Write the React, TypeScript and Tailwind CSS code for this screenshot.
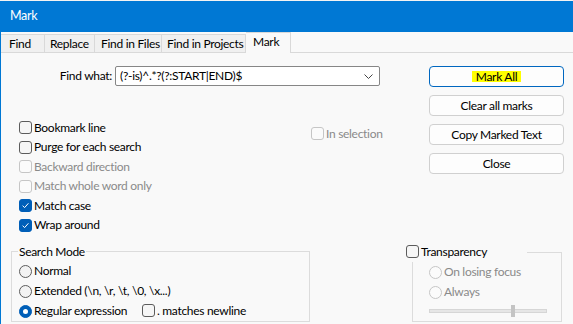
import React from "react";

type BoxProps = {
  checked?: boolean;
  disabled?: boolean;
  children?: React.ReactNode;
};

function Check({ checked = false, disabled = false, children }: BoxProps) {
  return (
    <div className={`flex items-center h-[19.5px] ${disabled ? "text-[#8a8a8a]" : "text-black"}`}>
      <span
        className={`w-[13px] h-[13px] rounded-[3px] border flex items-center justify-center shrink-0 ${
          checked
            ? "bg-[#005fb8] border-[#005fb8]"
            : disabled
            ? "bg-[#fbfbfb] border-[#c6c6c6]"
            : "bg-[#f6f6f6] border-[#5c5c5c]"
        }`}
      >
        {checked && (
          <svg width="9" height="9" viewBox="0 0 9 9">
            <path d="M1.6 4.7 L3.6 6.6 L7.4 2.3" stroke="white" strokeWidth="1" fill="none" />
          </svg>
        )}
      </span>
      {children && <span className="ml-[2px] whitespace-nowrap">{children}</span>}
    </div>
  );
}

function Radio({ checked = false, disabled = false, children }: BoxProps) {
  return (
    <div className={`flex items-center h-[20px] ${disabled ? "text-[#8a8a8a]" : "text-black"}`}>
      <span
        className={`w-[13px] h-[13px] rounded-full border flex items-center justify-center shrink-0 ${
          checked
            ? "bg-[#005fb8] border-[#005fb8]"
            : disabled
            ? "bg-[#fbfbfb] border-[#c6c6c6]"
            : "bg-[#f3f3f3] border-[#5c5c5c]"
        }`}
      >
        {checked && <span className="w-[5px] h-[5px] rounded-full bg-white" />}
      </span>
      <span className="ml-[2px] whitespace-nowrap">{children}</span>
    </div>
  );
}

function Button({ primary = false, children }: { primary?: boolean; children: React.ReactNode }) {
  return (
    <div
      className={`h-[21px] rounded-[4px] border bg-[#fdfdfd] flex items-center justify-center ${
        primary ? "border-[#0067c0]" : "border-[#d0d0d0]"
      }`}
    >
      {children}
    </div>
  );
}

const tabs = [
  { label: "Find", cls: "w-[44px] pl-[8px]" },
  { label: "Replace", cls: "w-[50px] pl-[5px]" },
  { label: "Find in Files", cls: "w-[67px] pl-[6px]" },
  { label: "Find in Projects", cls: "w-[84px] pl-[5px]" },
];

export default function App() {
  return (
    <div className="w-[573px] h-[324px] overflow-hidden bg-[#f9f9f9] font-['Lato',sans-serif] text-[12px] tracking-[-0.3px] leading-none text-black flex flex-col">
      <div className="h-[1px] bg-[#f3f3f3] shrink-0" />
      <div className="flex-1 flex flex-col border-l border-[#0078d4]">
        {/* title bar */}
        <div className="h-[31px] bg-[#0078d4] text-white text-[12.5px] flex items-center pl-[9px] shrink-0">Mark</div>

        {/* tabs */}
        <div className="h-[21px] flex items-end shrink-0">
          {tabs.map((t) => (
            <div
              key={t.label}
              className={`${t.cls} h-[19px] bg-[#f0f0f0] border-t border-b border-r border-[#d9d9d9] flex items-center whitespace-nowrap`}
            >
              {t.label}
            </div>
          ))}
          <div className="w-[45px] h-[21px] bg-[#f9f9f9] border-t border-r border-[#d9d9d9] pl-[7px] pt-[3px]">
            Mark
          </div>
          <div className="flex-1 h-[1px] bg-[#d9d9d9]" />
        </div>

        {/* content */}
        <div className="flex-1 flex">
          <div className="w-[405px] flex flex-col">
            <div className="mt-[13px] flex items-center h-[20px]">
              <div className="w-[114px] text-right pr-[3px] whitespace-nowrap">Find what:</div>
              <div className="w-[265px] h-[20px] bg-white border border-[#868686] rounded-[2px] flex items-center pl-[4px] pr-[6px]">
                <span className="flex-1 whitespace-nowrap">(?-is)^.*?(?:START|END)$</span>
                <svg width="9" height="5" viewBox="0 0 9 5">
                  <path d="M0.5 0.5 L4.5 4.5 L8.5 0.5" stroke="#444" strokeWidth="1" fill="none" />
                </svg>
              </div>
            </div>

            <div className="mt-[32px] flex">
              <div className="w-[310px] pl-[18px] flex flex-col">
                <Check>Bookmark line</Check>
                <Check>Purge for each search</Check>
                <Check disabled>Backward direction</Check>
                <Check disabled>Match whole word only</Check>
                <Check checked>Match case</Check>
                <Check checked>Wrap around</Check>
              </div>
              <div className="mt-[6px]">
                <Check disabled>In selection</Check>
              </div>
            </div>

            <div className="mt-[16px] ml-[10px] w-[299px] h-[71px] border border-[#dcdcdc] relative pt-[9px] pl-[7px]">
              <span className="absolute left-[6px] top-[-8px] px-[1px] bg-[#f9f9f9] leading-[16px]">Search Mode</span>
              <Radio>Normal</Radio>
              <Radio>Extended (\n, \r, \t, \0, \x...)</Radio>
              <div className="flex">
                <div className="w-[123px]">
                  <Radio checked>Regular expression</Radio>
                </div>
                <Check>. matches newline</Check>
              </div>
            </div>
          </div>

          <div className="flex-1 flex flex-col">
            <div className="mt-[13px] ml-[23px] w-[135px] flex flex-col gap-[8px]">
              <Button primary>
                <span className="bg-[#ffff00] px-[4px] leading-[11px]">Mark All</span>
              </Button>
              <Button>Clear all marks</Button>
              <Button>Copy Marked Text</Button>
              <Button>Close</Button>
            </div>

            <div className="mt-[78px] ml-[6px] w-[150px] h-[70px] border border-[#dcdcdc] relative pt-[9px] pl-[16px]">
              <div className="absolute left-[-7px] top-[-11px] w-[121px] bg-[#f9f9f9]">
                <Check>Transparency</Check>
              </div>
              <Radio disabled>On losing focus</Radio>
              <Radio disabled>Always</Radio>
              <div className="mt-[3px] w-[118px] h-[12px] relative flex items-center">
                <div className="w-full h-[4px] bg-[#e6e6e6] border border-[#d6d6d6]" />
                <div className="absolute left-[82px] top-0 w-[4px] h-[12px] bg-[#c4c4c4]" />
              </div>
            </div>
          </div>
        </div>
      </div>
    </div>
  );
}
